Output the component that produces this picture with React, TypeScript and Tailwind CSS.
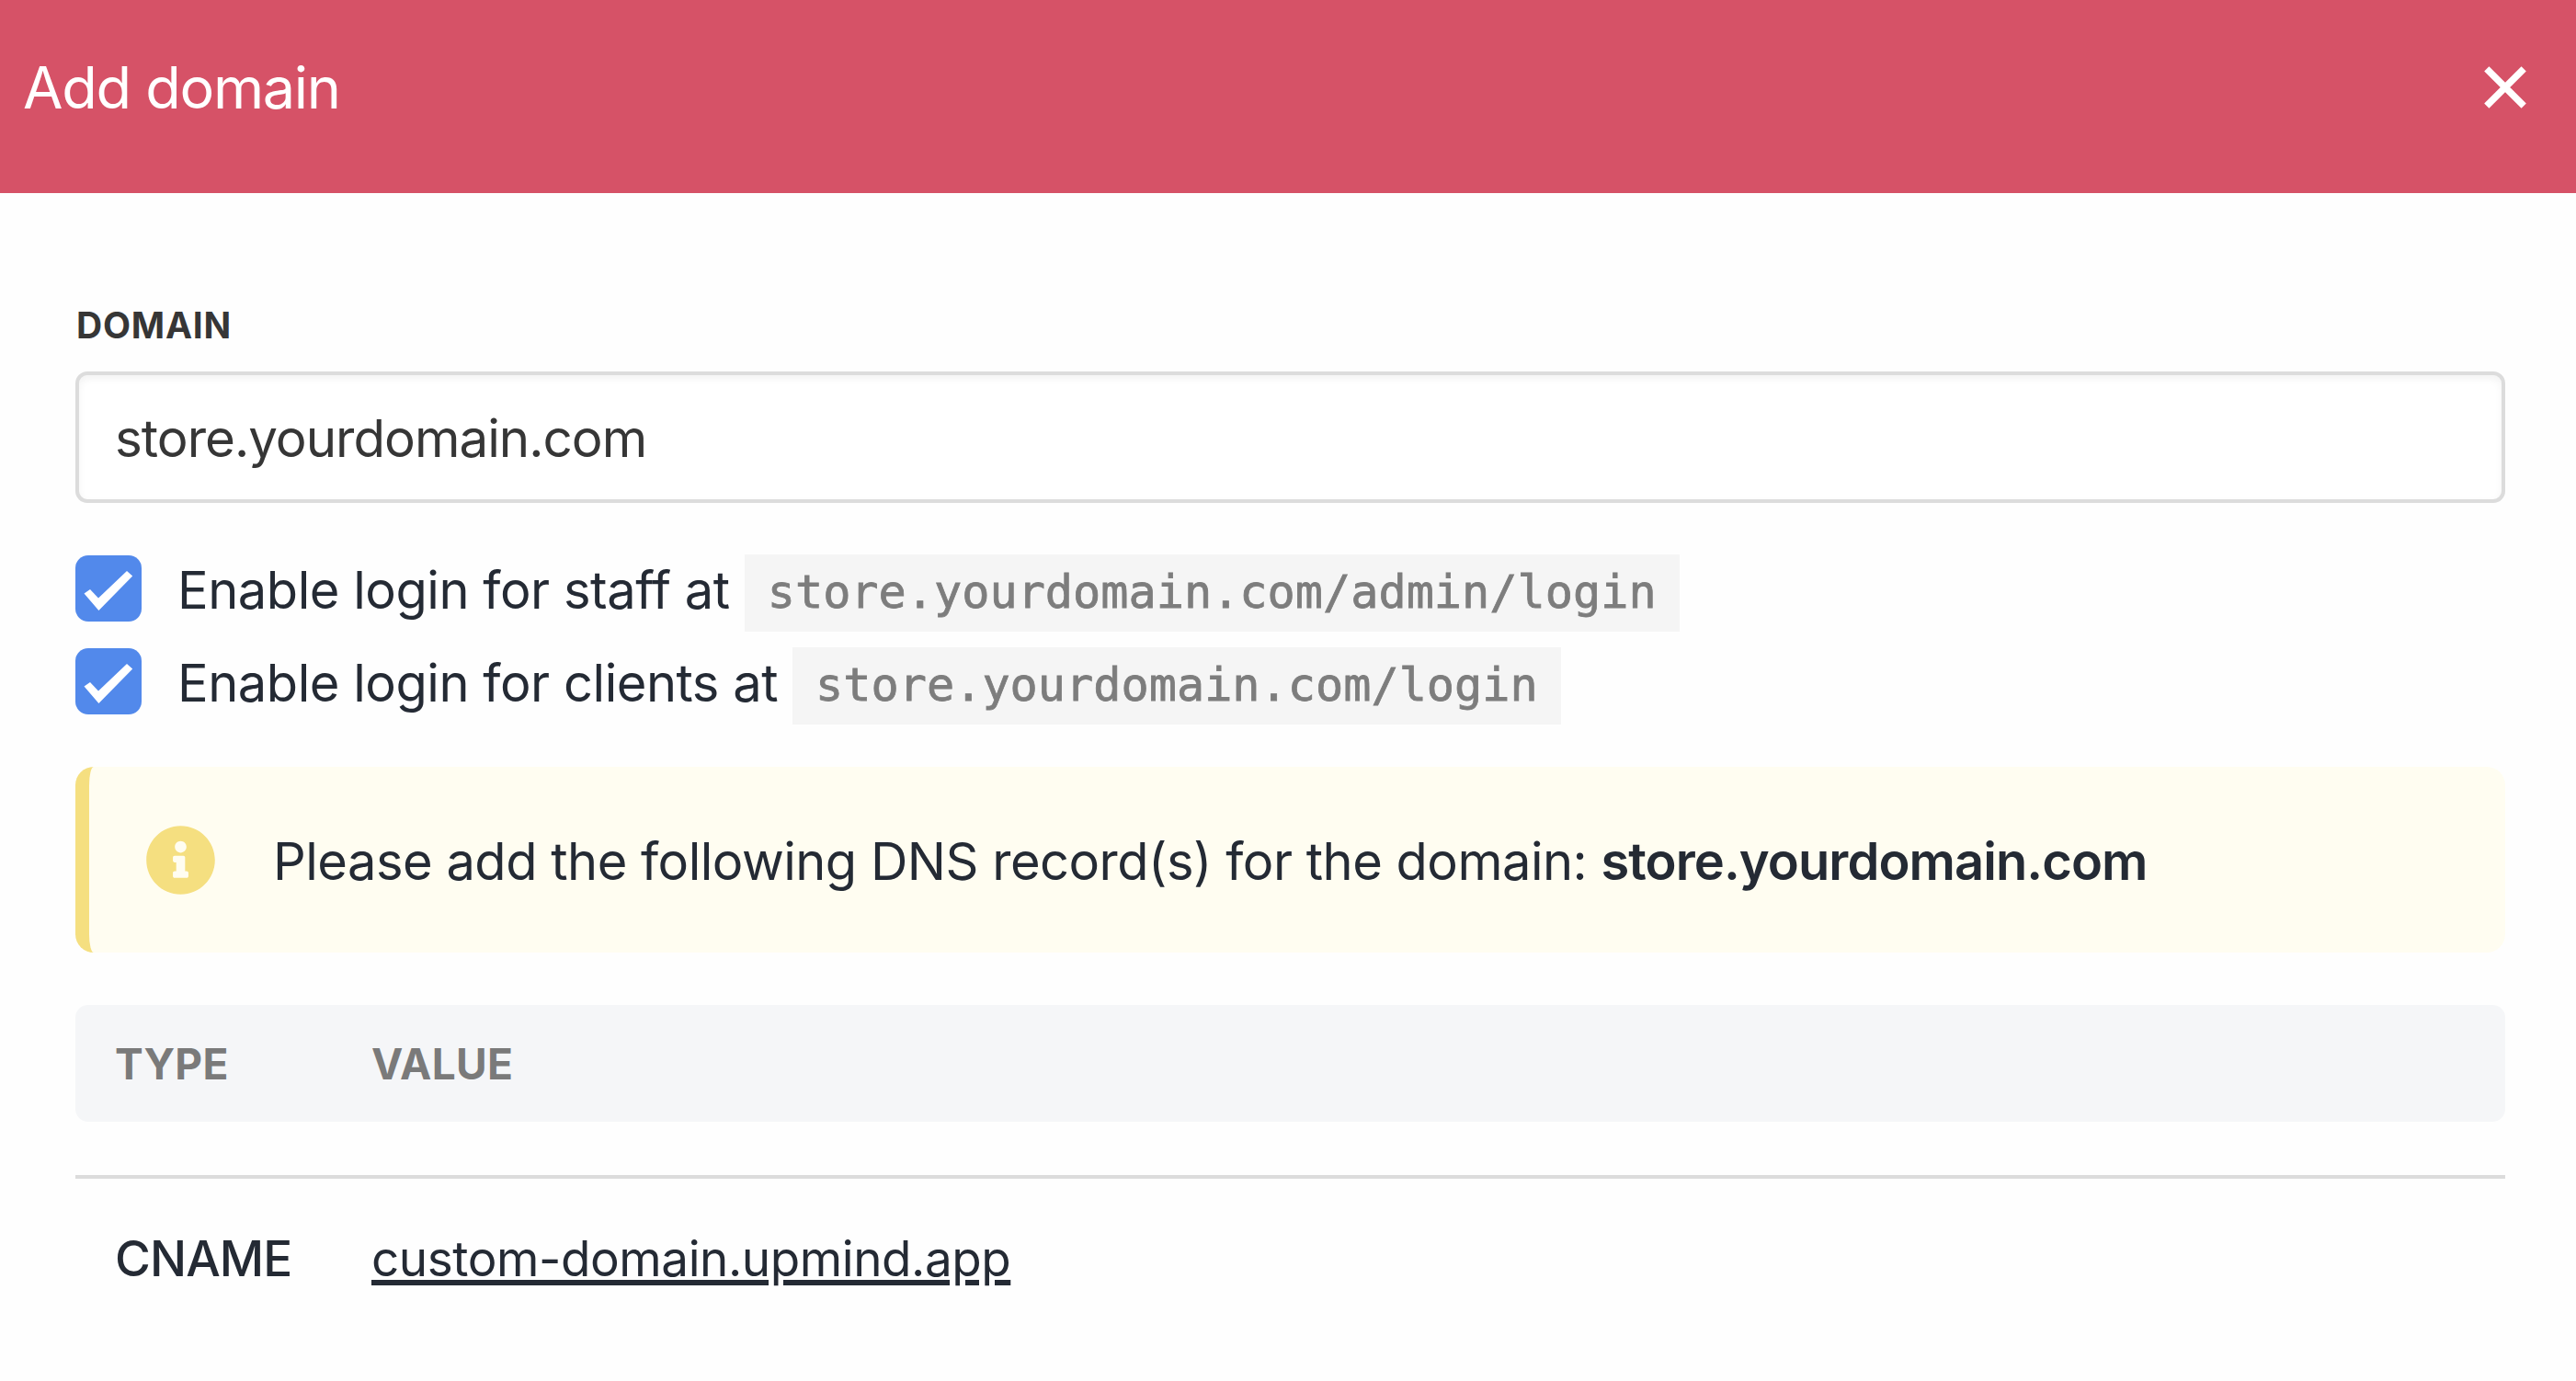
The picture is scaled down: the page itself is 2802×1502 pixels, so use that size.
import type { ReactNode } from 'react'
import { FaInfoCircle } from 'react-icons/fa'

const DOMAIN = 'store.yourdomain.com'

const logins = [
  { label: 'Enable login for staff at', url: `${DOMAIN}/admin/login` },
  { label: 'Enable login for clients at', url: `${DOMAIN}/login` },
]

const records = [
  { type: 'CNAME', value: 'custom-domain.upmind.app' },
]

function CloseIcon() {
  return (
    <svg
      viewBox="0 0 46 46"
      className="h-[46px] w-[46px]"
      fill="none"
      stroke="currentColor"
      strokeWidth="7.4"
    >
      <path d="M2.8 2.8 43.2 43.2M43.2 2.8 2.8 43.2" />
    </svg>
  )
}

function Checkbox() {
  return (
    <span className="block h-[72px] w-[72px] shrink-0 rounded-[14px] bg-[#5289eb]">
      <svg
        viewBox="0 0 72 72"
        className="h-[72px] w-[72px]"
        fill="white"
      >
        <path d="M9.5 41.5 16 37 25 46.5 56 17 62.2 22.5 25.4 60Z" />
      </svg>
    </span>
  )
}

function LoginOption({ label, url }: { label: string, url: string }) {
  return (
    <label className="flex h-[101px] items-start">
      <Checkbox />
      <span className="ml-[39px] flex items-start whitespace-pre">
        <span className="pt-[2px] text-[56px] leading-[72px] tracking-[-0.46px]">
          {label}
        </span>
        <code className="ml-[16px] -mt-px h-[84px] bg-[#f5f5f5] px-[25px] font-['DejaVu_Sans_Mono',monospace] text-[50.2px] leading-[82px] text-[#7d7d7d] [-webkit-text-stroke:0.8px]">
          {url}
        </code>
      </span>
    </label>
  )
}

function Notice({ children }: { children: ReactNode }) {
  return (
    <div className="mt-[28px] flex h-[202px] items-center rounded-[20px] border-l-[15px] border-[#f5df80] bg-[#fffdf1]">
      <FaInfoCircle className="ml-[61px] h-[77px] w-[77px] text-[#f5df80]" />
      <p className="ml-[62px] pt-[3px] whitespace-pre text-[56px] leading-[72px] tracking-[-0.5px]">
        {children}
      </p>
    </div>
  )
}

function App() {
  return (
    <div className="h-[1502px] w-[2802px] overflow-hidden bg-[#fefefe] font-['Inter',sans-serif] text-[#242a34]">
      <header className="flex h-[210px] items-start justify-between bg-[#d65267] pt-[55px] pr-[54px] pl-[25px] text-white">
        <h1 className="text-[63px] leading-[80px] tracking-[-1.3px]">
          Add domain
        </h1>
        <button
          type="button"
          aria-label="Close"
          className="mt-[17px]"
        >
          <CloseIcon />
        </button>
      </header>
      <main className="pt-[119px] pr-[77px] pl-[82px]">
        <div className="pt-px pl-px text-[39px] leading-[48px] font-bold tracking-[0.8px] text-[#363636]">
          DOMAIN
        </div>
        <div className="mt-[26px] flex h-[143px] items-center rounded-[13px] border-4 border-[#dcdcdc] bg-white pt-[3px] pl-[39px] text-[56.5px] tracking-[-1px] text-[#363636] shadow-[inset_0_4px_8px_rgba(10,10,10,0.05)]">
          {DOMAIN}
        </div>
        <div className="mt-[57px]">
          {logins.map(login => (
            <LoginOption
              key={login.url}
              label={login.label}
              url={login.url}
            />
          ))}
        </div>
        <Notice>
          {'Please add the following DNS record(s) for the domain: '}
          <strong className="font-semibold tracking-[-0.94px]">
            {DOMAIN}
          </strong>
        </Notice>
        <div className="mt-[57px] grid h-[127px] grid-cols-[279px_1fr] items-center rounded-[14px] bg-[#f5f6f8] pt-[2px] pl-[43px] text-[46px] font-bold tracking-[0.3px] text-[#7a7a7a]">
          <div>TYPE</div>
          <div>VALUE</div>
        </div>
        <div className="mt-[58px] border-t-4 border-[#dcdcdc]">
          {records.map(record => (
            <div
              key={record.value}
              className="grid h-[176px] grid-cols-[279px_1fr] items-center pl-[43px] text-[53px]"
            >
              <div className="font-medium tracking-[-0.9px]">
                {record.type}
              </div>
              <div>
                <a className="tracking-[-0.43px] underline decoration-[5.5px] underline-offset-[4px]">
                  {record.value}
                </a>
              </div>
            </div>
          ))}
        </div>
      </main>
    </div>
  )
}

export default App
